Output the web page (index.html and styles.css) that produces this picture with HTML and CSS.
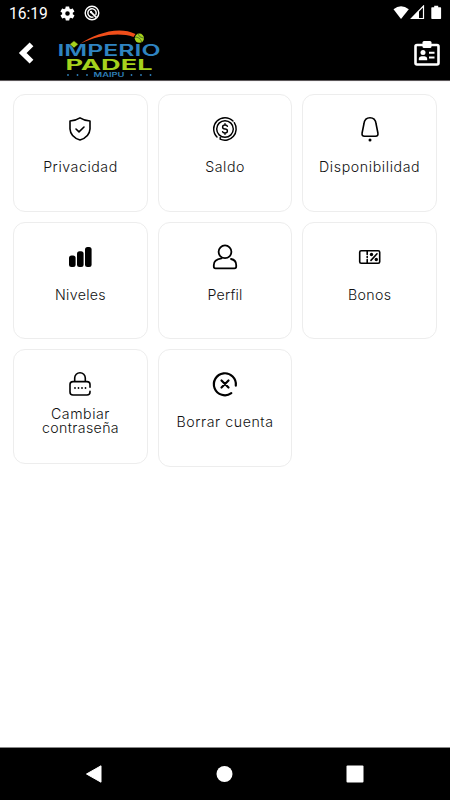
FILE: index.html
```html
<!DOCTYPE html>
<html lang="es">
<head>
<meta charset="utf-8">
<title>Imperio Padel</title>
<link rel="stylesheet" href="styles.css">
</head>
<body>
<div class="screen">
  <div class="status">
    <span class="clock">16:19</span>
    <svg class="gear" width="17" height="17" viewBox="0 0 24 24"><path fill="#fff" d="M19.4 13c0-.3.1-.6.1-1s0-.7-.1-1l2.1-1.600c.2-.2.3-.4.1-.7l-2-3.400c-.1-.2-.4-.3-.6-.2l-2.500 1c-.5-.4-1.100-.7-1.700-1l-.4-2.600c0-.2-.2-.4-.5-.4h-4c-.2 0-.4.200-.5.400l-.4 2.600c-.6.300-1.200.6-1.700 1l-2.500-1c-.2-.1-.5 0-.6.200l-2 3.400c-.1.300 0 .5.100.7L4.500 11c0 .3-.1.700-.1 1s0 .7.100 1l-2.100 1.600c-.2.200-.3.400-.1.700l2 3.400c.1.200.4.300.6.200l2.500-1c.5.400 1.100.7 1.700 1l.4 2.600c0 .2.200.4.500.4h4c.2 0 .4-.2.500-.4l.4-2.600c.6-.3 1.200-.6 1.700-1l2.500 1c.2.100.5 0 .6-.2l2-3.400c.1-.2.100-.5-.1-.7L19.400 13zM12 15.200A3.200 3.200 0 1 1 12 8.800a3.200 3.200 0 0 1 0 6.400z"/></svg>
    <svg class="target" width="16" height="16" viewBox="0 0 16 16" fill="none" stroke="#fff"><circle cx="8" cy="8" r="6.800" stroke-width="1.400"/><path d="M11.700 10A4.200 4.200 0 1 0 9.500 11.900" stroke-width="1.500"/><path d="M6.800 6.800L12.300 12.300" stroke-width="1.800"/><circle cx="7" cy="7" r="1.200" fill="#fff" stroke="none"/></svg>
    <svg class="signals" width="50" height="16" viewBox="0 0 50 16"><path d="M0.500 4.200Q8 -1.700 15.800 4.200L8 14z" fill="#fff"/><path d="M30.500 1V13.500H18.500z" fill="none" stroke="#fff" stroke-width="1.200"/><path d="M26 5.500V14H18z" fill="#fff"/><path d="M39 2.200h2.200V.7h4v1.500h2.200q.7 0 .7.700v10.400q0 .7-.7.700H39q-.7 0-.7-.7V2.900q0-.7.700-.7z" fill="#fff"/></svg>
  </div>
  <header class="header">
    <svg class="back" width="16" height="24" viewBox="0 0 16 24"><path d="M13.500 3.300L4.700 12L13.500 20.700" fill="none" stroke="#fff" stroke-width="5.400"/></svg>
    <svg class="logo" width="110" height="52" viewBox="54 28 110 52">
      <path d="M80 44C95 34 118 25.500 135.500 34L133.500 37C119 32 98 35 80 44z" fill="#f04e1a"/>
      <circle cx="139.400" cy="38.200" r="4.600" fill="#a6d21d"/>
      <path d="M134.800 37.200Q139.500 36.300 141.800 42.200M137.800 33.800Q139 37.500 144 38.300" fill="none" stroke="#31502a" stroke-width=".7"/>
      <text class="imperio" x="57.500" y="56.200" textLength="103" lengthAdjust="spacingAndGlyphs">IMPERIO</text>
      <path d="M74 40.800l4.300 3.500-4.300 3.700-4.300-3.700z" fill="#a6d21d" stroke="#000" stroke-width=".5"/>
      <text class="padel" x="65.500" y="70" textLength="87" lengthAdjust="spacingAndGlyphs">PADEL</text>
      <text class="maipu" x="93.500" y="77" textLength="31" lengthAdjust="spacingAndGlyphs">MAIPU</text>
      <g fill="#2f80bb"><circle cx="68" cy="75" r=".9"/><circle cx="77.500" cy="75" r=".9"/><circle cx="87" cy="75" r=".9"/><circle cx="131.500" cy="75" r=".9"/><circle cx="141" cy="75" r=".9"/><circle cx="150.500" cy="75" r=".9"/></g>
    </svg>
    <svg class="badge" width="26" height="25" viewBox="0 0 26 25"><rect x="1.500" y="4" width="23" height="19.500" rx="1.500" fill="none" stroke="#fff" stroke-width="2.600"/><rect x="8.500" y="0" width="9" height="7" rx="1.500" fill="#fff"/><circle cx="9" cy="11.500" r="2.500" fill="#fff"/><path d="M4.800 19.200v-1.700q0-1.900 2.700-2.200h3q2.700.3 2.700 2.200v1.700zM15 10.800h5.500v2H15zM15 15.600h5.500v2H15z" fill="#fff"/></svg>
  </header>
  <main class="grid">
    <div class="card">
      <svg class="icon" viewBox="0 0 24 24"><path d="M12 .9Q16.500 3.800 22 4V12Q21.500 20 12 23Q2.500 20 2 12V4Q7.500 3.800 12 .9z"/><path d="M8 12l3 2.800 5-4.800"/></svg>
      <span class="label privacidad">Privacidad</span>
    </div>
    <div class="card">
      <svg class="icon thin" viewBox="0 0 24 24"><path d="M4 20A11.300 11.300 0 0 1 20 4M21.300 5.700A11.300 11.300 0 0 1 7.200 22.200V20.500"/><circle cx="12" cy="12" r="8.300"/><path d="M14.400 9.300Q14 8 12 8Q9.600 8 9.600 10T12 12T14.400 14Q14.400 16 12 16Q10 16 9.600 14.700M12 6.800V8M12 16V17.200"/></svg>
      <span class="label saldo">Saldo</span>
    </div>
    <div class="card">
      <svg class="icon" viewBox="0 0 24 24"><path d="M12 .7C8.500.7 6.500 3 6 6.500L4.100 16Q3.600 19.300 6.500 19.300H17.500Q20.400 19.300 19.900 16L18 6.500C17.500 3 15.500.7 12 .7z"/><circle class="solid" cx="12" cy="23" r="1.500"/></svg>
      <span class="label disponibilidad">Disponibilidad</span>
    </div>
    <div class="card">
      <svg class="icon" viewBox="0 0 24 24"><g class="solid"><rect x="1" y="10.500" width="6.600" height="11.500" rx="2.500"/><rect x="9" y="6.300" width="6.600" height="15.700" rx="2.500"/><rect x="17" y="2" width="6.600" height="20" rx="2.500"/></g></svg>
      <span class="label niveles">Niveles</span>
    </div>
    <div class="card">
      <svg class="icon bold" viewBox="0 0 24 24"><circle cx="12" cy="6.800" r="6.400"/><path d="M8.500 13.300C3 14 .8 16.500 .8 20V21.500Q.8 23.300 2.500 23.300H21.500Q23.200 23.300 23.200 21.500V20Q23.200 15 18 14"/></svg>
      <span class="label perfil">Perfil</span>
    </div>
    <div class="card">
      <svg class="icon" viewBox="0 0 24 24"><rect x="1.700" y="5.700" width="20" height="12.600" rx="1.500"/><path d="M9.200 6V9.500M9.200 11.500V12.500M9.200 14.500V18M19 8.800L13 15.400"/><g class="solid"><circle cx="13.500" cy="9.500" r="1.700"/><circle cx="18.300" cy="14.500" r="1.700"/></g></svg>
      <span class="label bonos">Bonos</span>
    </div>
    <div class="card tall-label">
      <svg class="icon" viewBox="0 0 24 24"><path d="M6.700 9.500V6A5.300 5.300 0 0 1 17.300 6V9.500M22 15.200V12.500Q22 9.600 19 9.600H5Q2 9.600 2 12.500V20Q2 23 5 23H19Q22 23 22 20V19.200"/><g class="solid"><circle cx="7" cy="16" r=".9"/><circle cx="10.500" cy="16" r=".9"/><circle cx="14" cy="16" r=".9"/><circle cx="17.500" cy="16" r=".9"/></g></svg>
      <span class="label"><span class="cambiar">Cambiar</span><br><span class="contrasena">contraseña</span></span>
    </div>
    <div class="card">
      <svg class="icon heavy" viewBox="0 0 24 24"><path d="M22.800 13.600A11 11 0 1 0 18.300 21.200M8.500 8.500l7 7M15.500 8.500l-7 7"/></svg>
      <span class="label borrar">Borrar cuenta</span>
    </div>
  </main>
  <nav class="navbar">
    <svg width="18" height="18" viewBox="0 0 18 18"><path d="M1.500 9L16 .8V17.200z" fill="#fff" stroke="#fff" stroke-linejoin="round"/></svg>
    <svg width="18" height="18" viewBox="0 0 18 18"><circle cx="9.500" cy="9" r="8" fill="#fff"/></svg>
    <svg width="18" height="18" viewBox="0 0 18 18"><rect x=".5" y=".5" width="17" height="17" rx="1" fill="#fff"/></svg>
  </nav>
</div>
</body>
</html>
```
FILE: styles.css
```css
* { box-sizing: border-box; }
body { margin: 0; background: #fff; }
svg { display: block; flex: none; }
.screen { width: 450px; height: 800px; display: flex; flex-direction: column; overflow: hidden; }
.status { height: 27px; background: #000; color: #fff; display: flex; align-items: center; padding: 0 7px 1px 9px; }
.clock { width: 49.500px; font: 400 15.600px/26px Roboto, sans-serif; padding-top: 1px; }
.target { margin-left: 8px; }
.signals { margin-left: auto; }
.header { height: 54px; background: #000; display: flex; align-items: flex-start; padding: 0 10px 0 18px; border-bottom: 1px solid #5b5759; }
.back { margin-top: 14px; }
.logo { margin: 1px 0 0 20px; }
.badge { margin: 14px 0 0 auto; }
.imperio { font: 600 15.600px Inter, sans-serif; fill: #2f84c1; }
.padel { font: 700 14.400px Inter, sans-serif; fill: #a6d21d; }
.maipu { font: 600 5.600px Inter, sans-serif; fill: #2f80bb; }
.grid { flex: 1; display: grid; grid-template-columns: repeat(3, 134.600px); grid-auto-rows: 117.500px; gap: 10px; padding: 12px 0 0 13.200px; align-items: start; align-content: start; border-top: 1px solid #f7f6f7; }
.card { height: 117.500px; border: 1px solid #ededed; border-radius: 12px; display: flex; flex-direction: column; align-items: center; padding-top: 22px; }
.tall-label { height: 114.500px; }
.icon { width: 24px; height: 24px; fill: none; stroke: #000; stroke-width: 1.600; stroke-linecap: round; stroke-linejoin: round; overflow: visible; }
.thin { stroke-width: 1.450; }
.bold { stroke-width: 1.800; }
.heavy { stroke-width: 2.200; }
.solid { fill: #000; stroke: none; }
.label { margin-top: 19px; font: 300 14.200px/14.400px Inter, "Open Sans", sans-serif; color: #111; text-align: center; white-space: nowrap; }
.tall-label .label { margin-top: 11px; }
.privacidad { letter-spacing: .55px; }
.saldo { letter-spacing: .55px; }
.disponibilidad { letter-spacing: .6px; }
.niveles { letter-spacing: .3px; }
.perfil { letter-spacing: .2px; }
.bonos { letter-spacing: .3px; }
.cambiar { letter-spacing: .55px; }
.contrasena { letter-spacing: .35px; }
.borrar { letter-spacing: .55px; }
.navbar { height: 53px; background: #000; border-top: 1px solid #888; display: flex; justify-content: space-between; align-items: center; padding: 0 86.500px 0 85px; }
```
